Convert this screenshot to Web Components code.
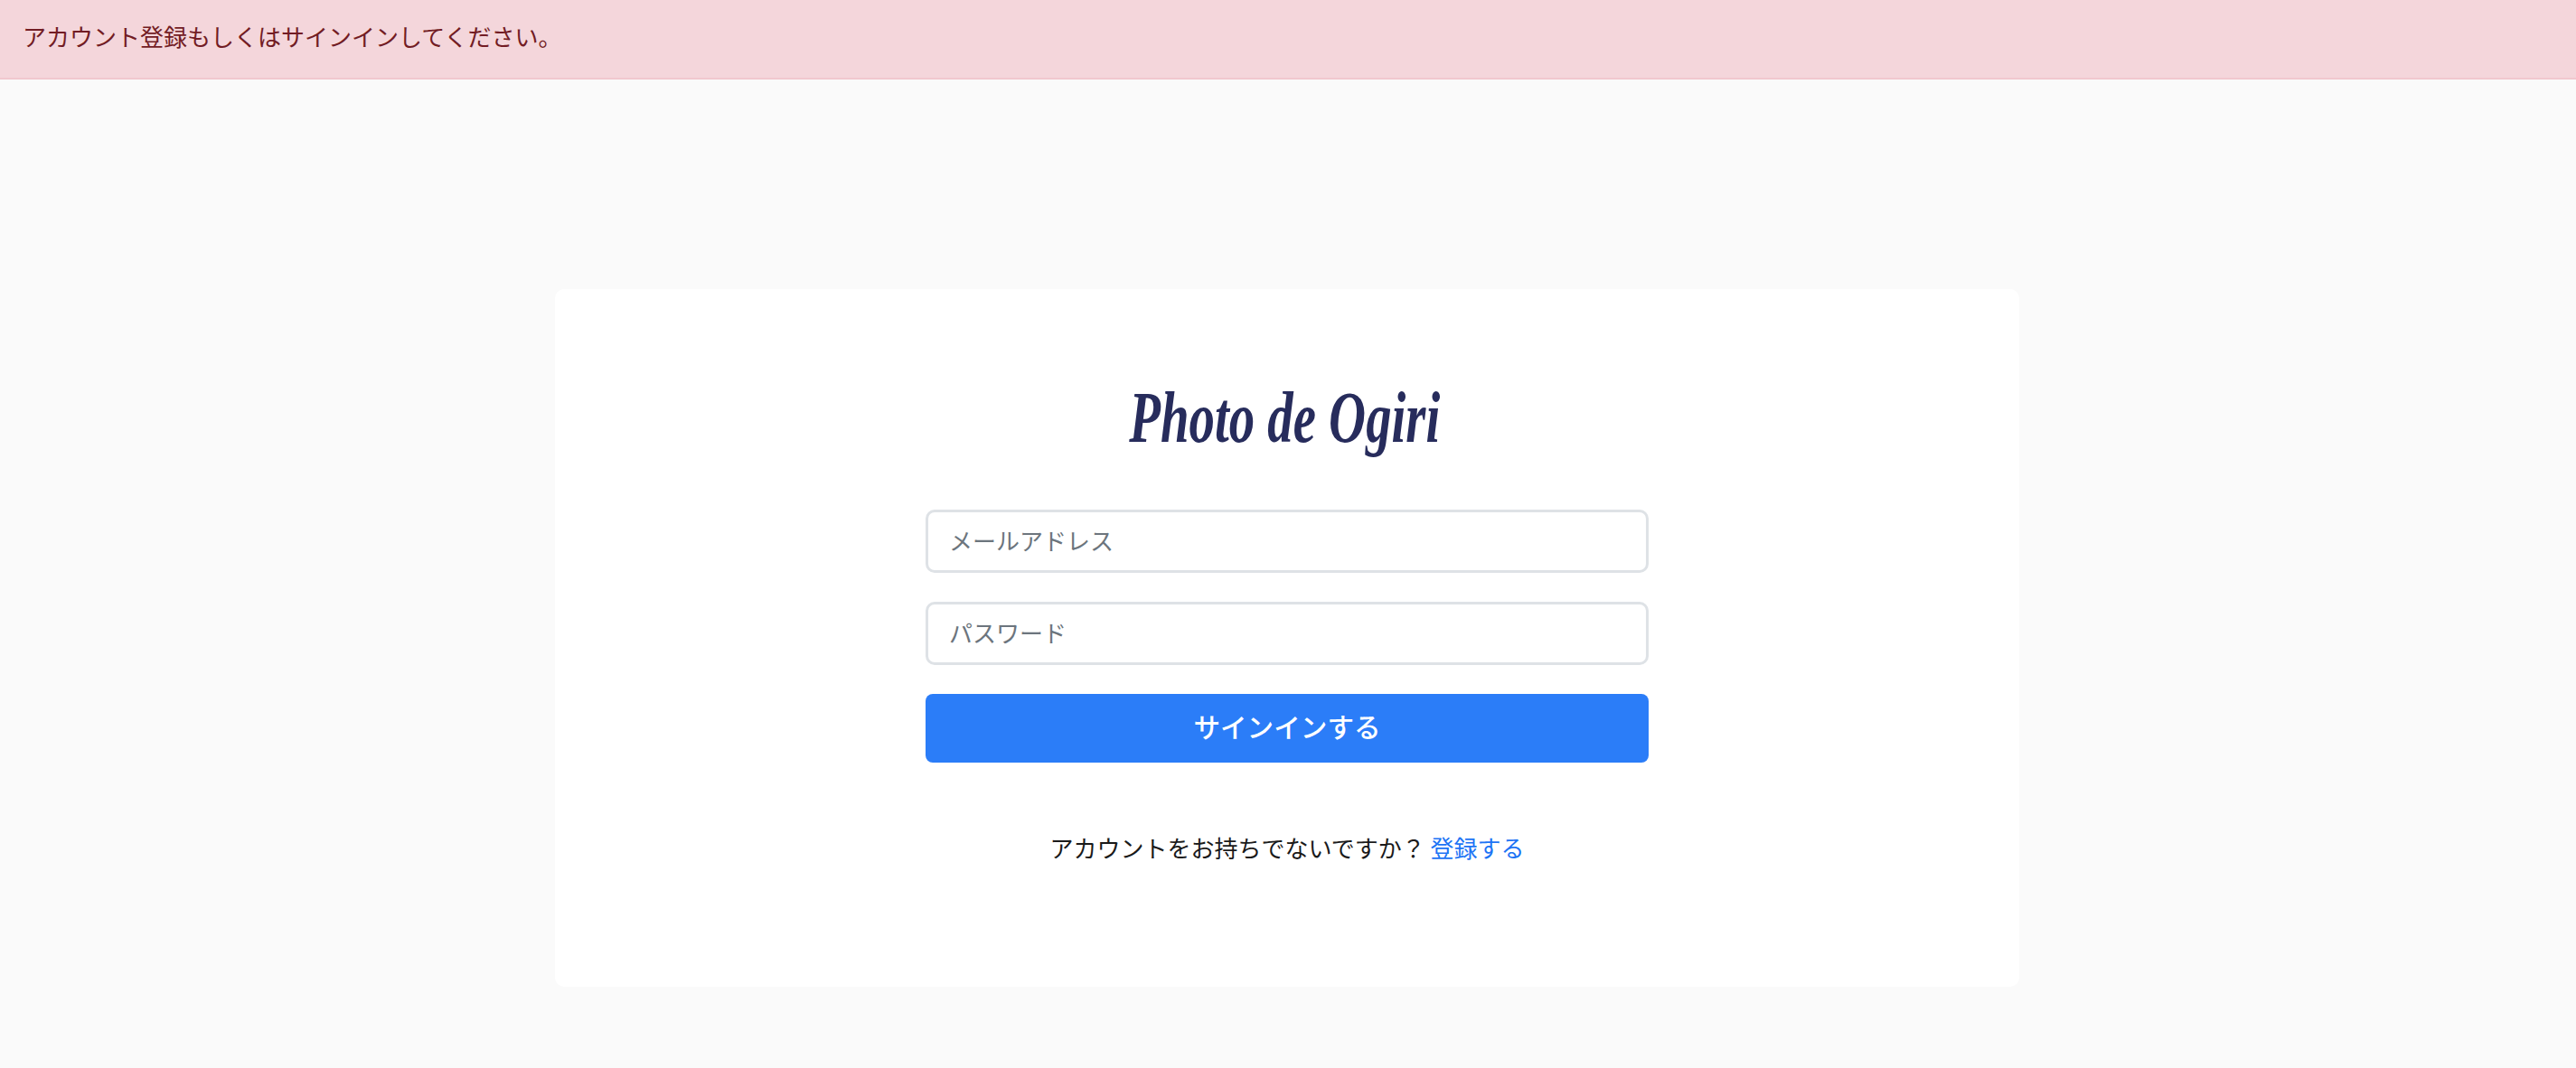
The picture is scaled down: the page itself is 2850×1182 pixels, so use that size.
<!DOCTYPE html>
<html lang="ja">
<head>
<meta charset="utf-8">
<title>Photo de Ogiri</title>
<style>
    html, body { margin: 0; height: 100%; }
    body {
        background: #fafafa;
        color: #212529;
        font-family: "Noto Sans CJK JP", "Noto Sans", sans-serif;
    }
</style>
</head>
<body>
<flash-alert>アカウント登録もしくはサインインしてください。</flash-alert>
<signin-page>
    <signin-card>
        <brand-logo slot="logo">Photo de Ogiri</brand-logo>
        <text-field>メールアドレス</text-field>
        <text-field>パスワード</text-field>
        <submit-button>サインインする</submit-button>
        <span slot="footer">アカウントをお持ちでないですか？ <signup-link>登録する</signup-link></span>
    </signin-card>
</signin-page>
<script>
const shadow = (el, html) => {
    el.attachShadow({ mode: 'open' });
    el.shadowRoot.innerHTML = html;
};

customElements.define('flash-alert', class extends HTMLElement {
    constructor() {
        super();
        shadow(this, `
            <style>
                :host {
                    display: flex;
                    align-items: center;
                    box-sizing: border-box;
                    height: 88px;
                    padding: 0 25px 6px;
                    background: #f4d6db;
                    border-bottom: 2px solid #f1c8ce;
                    color: #721c24;
                    font-size: 26px;
                    line-height: 40px;
                }
            </style>
            <slot></slot>
        `);
    }
});

customElements.define('signin-page', class extends HTMLElement {
    constructor() {
        super();
        shadow(this, `
            <style>
                :host {
                    display: flex;
                    justify-content: center;
                    padding: 232px 2px 0 0;
                }
            </style>
            <slot></slot>
        `);
    }
});

customElements.define('signin-card', class extends HTMLElement {
    constructor() {
        super();
        shadow(this, `
            <style>
                :host {
                    display: flex;
                    flex-direction: column;
                    align-items: center;
                    box-sizing: border-box;
                    width: 1620px;
                    height: 772px;
                    padding-top: 92px;
                    background: #fff;
                    border-radius: 10px;
                }
                form {
                    display: flex;
                    flex-direction: column;
                    gap: 32px;
                    width: 800px;
                    margin: 0;
                }
                footer {
                    margin-top: 74px;
                    color: #1a1a1a;
                    font-size: 26px;
                    line-height: 40px;
                }
            </style>
            <slot name="logo"></slot>
            <form><slot></slot></form>
            <footer><slot name="footer"></slot></footer>
        `);
    }
});

customElements.define('brand-logo', class extends HTMLElement {
    constructor() {
        super();
        shadow(this, `
            <style>
                :host {
                    display: block;
                    height: 152px;
                    color: #272c5c;
                    font-family: "Liberation Serif", serif;
                    font-style: italic;
                    font-weight: 700;
                    font-size: 80px;
                    line-height: 100px;
                    text-align: center;
                    white-space: nowrap;
                    transform: translateX(-3px) scaleX(.71);
                }
            </style>
            <slot></slot>
        `);
    }
});

customElements.define('text-field', class extends HTMLElement {
    constructor() {
        super();
        shadow(this, `
            <style>
                :host {
                    display: flex;
                    align-items: center;
                    box-sizing: border-box;
                    height: 70px;
                    padding: 0 23px 2px;
                    background: #fff;
                    border: 3px solid #dee2e6;
                    border-radius: 10px;
                    color: #6c757d;
                    font-size: 26px;
                    line-height: 40px;
                }
            </style>
            <slot></slot>
        `);
        this.setAttribute('role', 'textbox');
    }
});

customElements.define('submit-button', class extends HTMLElement {
    constructor() {
        super();
        shadow(this, `
            <style>
                :host {
                    display: flex;
                    align-items: center;
                    justify-content: center;
                    box-sizing: border-box;
                    height: 76px;
                    padding-bottom: 4px;
                    background: #2b7df8;
                    border-radius: 8px;
                    color: #fff;
                    font-size: 29.6px;
                    font-weight: 500;
                    line-height: 44px;
                    cursor: pointer;
                }
            </style>
            <slot></slot>
        `);
        this.setAttribute('role', 'button');
    }
});

customElements.define('signup-link', class extends HTMLElement {
    constructor() {
        super();
        shadow(this, `
            <style>
                :host { display: inline; }
                a { color: #1d74f5; text-decoration: none; }
            </style>
            <a href="#"><slot></slot></a>
        `);
    }
});
</script>
</body>
</html>
